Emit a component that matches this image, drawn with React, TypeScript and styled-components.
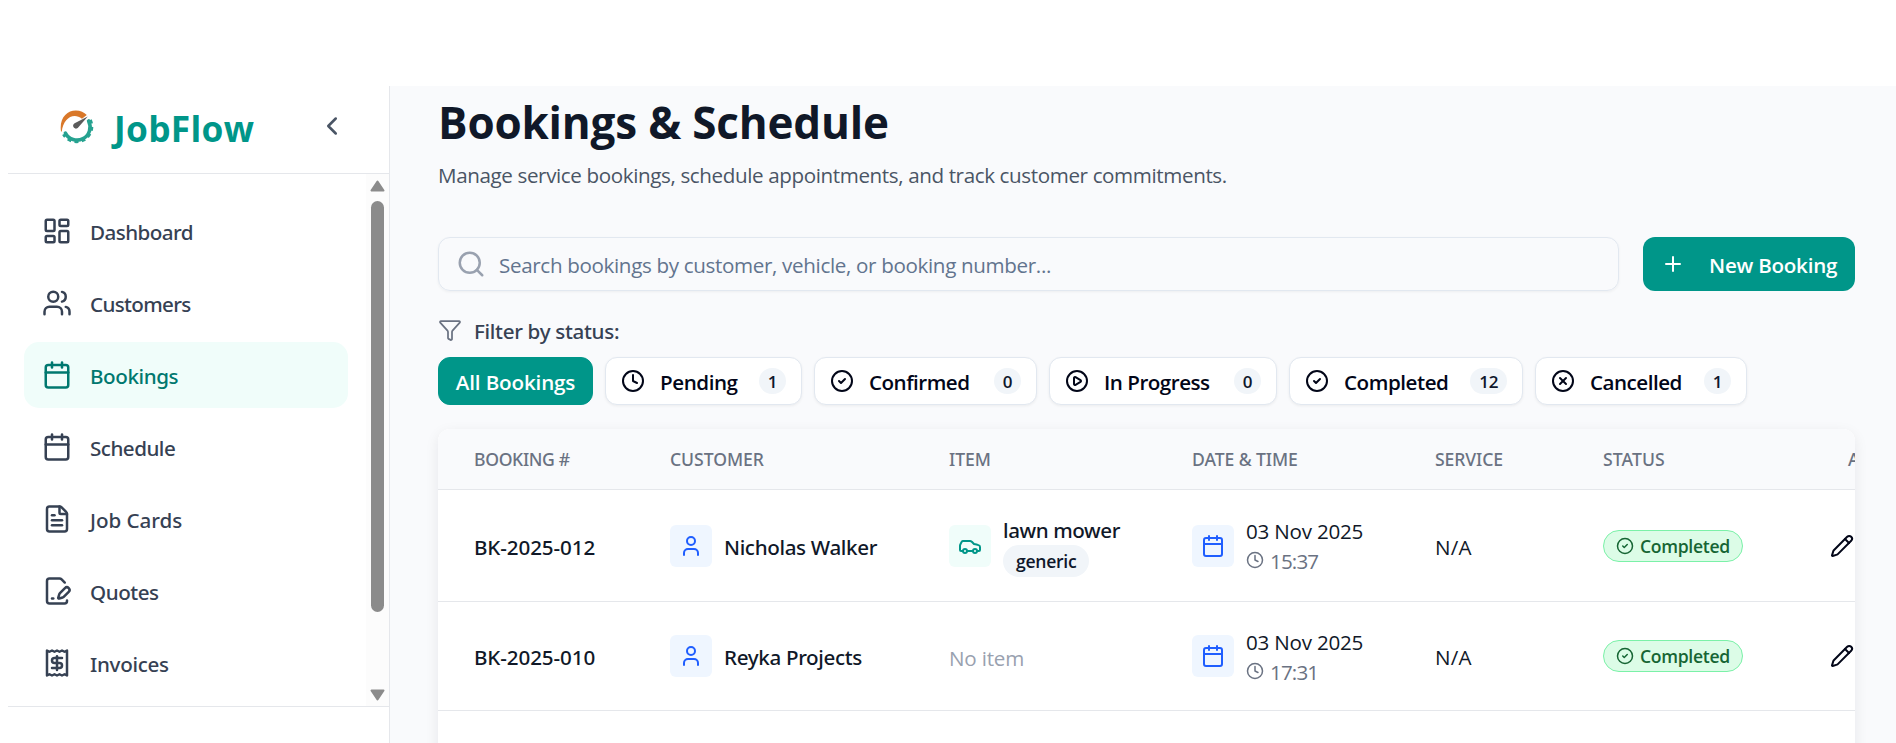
import React from "react";
import styled, { createGlobalStyle } from "styled-components";
import {
  Calendar,
  Car,
  ChevronLeft,
  CircleCheck,
  CirclePlay,
  CircleX,
  Clock,
  FilePenLine,
  FileText,
  Funnel,
  LayoutDashboard,
  Pencil,
  Plus,
  Receipt,
  Search,
  User,
  Users,
  type LucideIcon,
} from "lucide-react";

const GlobalStyle = createGlobalStyle`
  * { box-sizing: border-box; }
  html, body { margin: 0; height: 743px; overflow: hidden; background: #ffffff; }
  body { font-family: "Open Sans", "Noto Sans", sans-serif; color: #101828; }
  svg { flex-shrink: 0; display: block; }
`;

const Page = styled.div`
  display: flex;
  height: 743px;
  padding: 86px 0 0 8px;
  overflow: hidden;
`;

/* Text */

const Text = styled.span<{ $size?: number; $weight?: number; $color?: string; $track?: number; $drop?: number }>`
  font-size: ${(p) => p.$size ?? 20.6}px;
  font-weight: ${(p) => p.$weight ?? 600};
  line-height: 30px;
  color: ${(p) => p.$color ?? "inherit"};
  letter-spacing: ${(p) => p.$track ?? 0}px;
  padding-top: ${(p) => p.$drop ?? 0}px;
  white-space: nowrap;
`;

const MediumText = styled(Text)`
  font-family: "Noto Sans", "Open Sans", sans-serif;
  font-weight: 500;
`;

/* Sidebar */

const Sidebar = styled.aside`
  display: flex;
  flex-direction: column;
  width: 382px;
  flex-shrink: 0;
  border-right: 1px solid #e5e7eb;
`;

const SidebarHeader = styled.div`
  display: flex;
  align-items: center;
  height: 88px;
  padding: 0 42px 6px 52px;
  border-bottom: 1px solid #e5e7eb;
`;

const BrandName = styled.div`
  margin-left: 20px;
  padding-top: 2px;
  font-size: 35.3px;
  font-weight: 700;
  line-height: 40px;
  letter-spacing: 0.3px;
  color: #009689;
`;

const CollapseButton = styled.button`
  display: flex;
  margin-left: auto;
  padding: 0 0 1px;
  border: 0;
  background: none;
  color: #4a5565;
`;

const SidebarBody = styled.div`
  display: flex;
  height: 532px;
  overflow: hidden;
`;

const Nav = styled.nav`
  display: flex;
  flex-direction: column;
  flex: 1;
  gap: 6px;
  padding: 24px 18px 0 16px;
`;

const NavItem = styled.a<{ $active?: boolean }>`
  display: flex;
  align-items: center;
  gap: 18px;
  height: 66px;
  flex-shrink: 0;
  padding: 0 18px;
  border-radius: 15px;
  color: ${(p) => (p.$active ? "#00786f" : "#364153")};
  background: ${(p) => (p.$active ? "#f0fdfa" : "transparent")};
`;

const ScrollTrack = styled.div`
  display: flex;
  flex-direction: column;
  align-items: center;
  width: 23px;
  padding: 6px 0 5px;
  background: #fcfcfc;
`;

const ScrollThumb = styled.div`
  width: 13px;
  height: 411px;
  margin: 9px 0 auto;
  border-radius: 7px;
  background: #8b8b8b;
`;

const SidebarFooter = styled.div`
  flex: 1;
  border-top: 1px solid #e5e7eb;
`;

/* Main area */

const Main = styled.main`
  display: flex;
  flex-direction: column;
  flex: 1;
  min-width: 0;
  padding: 9px 41px 0 48px;
  background: #f9fafc;
`;

const Title = styled.h1`
  margin: 0;
  font-size: 44px;
  font-weight: 700;
  line-height: 54px;
  letter-spacing: -0.18px;
`;

const Subtitle = styled.p`
  margin: 11px 0 47px;
  font-size: 20.6px;
  line-height: 30px;
  letter-spacing: -0.38px;
  color: #4a5565;
`;

const Toolbar = styled.div`
  display: flex;
  gap: 24px;
  height: 54px;
  flex-shrink: 0;
`;

const SearchBox = styled.label`
  display: flex;
  align-items: center;
  flex: 1;
  gap: 13px;
  padding: 0 17px;
  border: 1px solid #e2e8f0;
  border-radius: 12px;
  box-shadow: 0 1px 3px rgba(0, 0, 0, 0.05);
  color: #99a1af;
`;

const SearchInput = styled.input`
  flex: 1;
  padding: 2px 0 0;
  border: 0;
  outline: 0;
  background: transparent;
  font-family: inherit;
  font-size: 20.6px;
  line-height: 30px;
  letter-spacing: -0.34px;

  &::placeholder {
    color: #62748e;
    opacity: 1;
  }
`;

const PrimaryButton = styled.button`
  display: flex;
  align-items: center;
  gap: 24px;
  width: 212px;
  padding: 0 0 0 18px;
  border: 0;
  border-radius: 12px;
  background: #009689;
  color: #ffffff;
  font-family: inherit;
`;

const FilterLabel = styled.div`
  display: flex;
  align-items: center;
  gap: 12px;
  height: 24px;
  margin-top: 27px;
  color: #6a7282;
`;

const Filters = styled.div`
  display: flex;
  gap: 12px;
  margin-top: 15px;
`;

const FilterPill = styled.button<{ $width: number; $active?: boolean }>`
  display: flex;
  align-items: center;
  justify-content: ${(p) => (p.$active ? "center" : "flex-start")};
  width: ${(p) => p.$width}px;
  height: 48px;
  padding: 0 15px;
  border: 1px solid ${(p) => (p.$active ? "#009689" : "#e2e8f0")};
  border-radius: 12px;
  background: ${(p) => (p.$active ? "#009689" : "#ffffff")};
  color: ${(p) => (p.$active ? "#ffffff" : "#020618")};
  box-shadow: ${(p) => (p.$active ? "none" : "0 1px 3px rgba(0, 0, 0, 0.06)")};
  font-family: inherit;

  svg {
    margin-right: 15px;
  }
`;

const Count = styled.span`
  display: flex;
  align-items: center;
  height: 26px;
  margin-left: auto;
  padding: 0 9px;
  border-radius: 13px;
  background: #f1f5f9;
  color: #0f172b;
  font-size: 17px;
  font-weight: 600;
  letter-spacing: -0.4px;
`;

/* Bookings table */

const TableShadow = styled.div`
  margin-top: 24px;
  border-radius: 12px;
  box-shadow: 0 4px 14px rgba(16, 24, 40, 0.08);
`;

const TableCard = styled.section`
  height: 400px;
  overflow: hidden;
  border-radius: 12px;
  background: #ffffff;
`;

const Row = styled.div<{ $height: number; $head?: boolean }>`
  display: grid;
  grid-template-columns: 196px 279px 243px 243px 168px 227px 160px;
  align-items: center;
  width: 1560px;
  height: ${(p) => p.$height}px;
  padding-left: 36px;
  border-bottom: 1px solid #e5e7eb;
  background: ${(p) => (p.$head ? "#f9fafc" : "#ffffff")};
`;

const Cell = styled.div<{ $indent?: number }>`
  display: flex;
  align-items: center;
  gap: 12px;
  padding-left: ${(p) => p.$indent ?? 0}px;
`;

const IconTile = styled.div<{ $tone: "blue" | "teal" }>`
  display: grid;
  place-items: center;
  width: 42px;
  height: 42px;
  border-radius: 6px;
  color: ${(p) => (p.$tone === "blue" ? "#1f5eff" : "#009689")};
  background: ${(p) => (p.$tone === "blue" ? "#eff6ff" : "#f0fdfa")};
`;

const Stack = styled.div`
  display: flex;
  flex-direction: column;
  align-items: flex-start;
  padding-top: 1px;
`;

const TimeLine = styled.div`
  display: flex;
  align-items: center;
  gap: 6px;
  color: #6a7282;

  svg {
    margin-bottom: 2px;
  }
`;

const TypeTag = styled.span`
  display: flex;
  align-items: center;
  height: 32px;
  padding: 0 13px;
  border-radius: 16px;
  background: #f1f5f9;
  color: #0f172b;
`;

const StatusTag = styled.span`
  display: flex;
  align-items: center;
  gap: 6px;
  width: 140px;
  height: 32px;
  padding: 0 12px;
  border: 1px solid #7bf1a8;
  border-radius: 16px;
  background: #dcfce7;
  color: #166534;
`;

/* A speedometer arc over the lower half of a gear. */
function Logo() {
  return (
    <svg width="34" height="34" viewBox="0 0 34 34" fill="none">
      <path d="M1 21.5 C-1 8 7 0.4 15.8 0.4 C20.4 0.4 24.2 2.2 26.8 5 L22 8.8 C13.5 1.8 3 8.5 1.8 21.5 Z" fill="#d9782a" />
      <path d="M28.6 11 A13 13 0 0 1 5.4 23.1" stroke="#26a290" strokeWidth="3.6" strokeLinecap="round" />
      <path d="M30.3 9.9 A15.2 15.2 0 0 1 3.5 24.2" stroke="#26a290" strokeWidth="3" strokeDasharray="3.8 3.4" />
      <path d="M27.8 6.6 L18.6 17 A2.9 2.9 0 1 1 14.6 13.2 Z" fill="#5b5b5b" />
    </svg>
  );
}

function ScrollArrow({ down }: { down?: boolean }) {
  return (
    <svg width="15" height="12" viewBox="0 0 15 12">
      <path
        d={down ? "M1.5 1.5 H13.5 L7.5 10.5 Z" : "M1.5 10.5 H13.5 L7.5 1.5 Z"}
        fill="#8b8b8b"
        stroke="#8b8b8b"
        strokeWidth="2"
        strokeLinejoin="round"
      />
    </svg>
  );
}

const navItems: { label: string; icon: LucideIcon; track: number; active?: boolean }[] = [
  { label: "Dashboard", icon: LayoutDashboard, track: -0.54 },
  { label: "Customers", icon: Users, track: -0.66 },
  { label: "Bookings", icon: Calendar, track: -0.4, active: true },
  { label: "Schedule", icon: Calendar, track: -0.5 },
  { label: "Job Cards", icon: FileText, track: -0.05 },
  { label: "Quotes", icon: FilePenLine, track: -0.45 },
  { label: "Invoices", icon: Receipt, track: -0.3 },
];

const filters: { label: string; icon: LucideIcon; count: number; width: number; track: number }[] = [
  { label: "Pending", icon: Clock, count: 1, width: 197, track: -0.45 },
  { label: "Confirmed", icon: CircleCheck, count: 0, width: 223, track: -0.52 },
  { label: "In Progress", icon: CirclePlay, count: 0, width: 228, track: -0.5 },
  { label: "Completed", icon: CircleCheck, count: 12, width: 234, track: -0.45 },
  { label: "Cancelled", icon: CircleX, count: 1, width: 212, track: -0.5 },
];

const headings: { label: string; track: number }[] = [
  { label: "BOOKING #", track: -0.33 },
  { label: "CUSTOMER", track: -0.05 },
  { label: "ITEM", track: -0.05 },
  { label: "DATE & TIME", track: -0.08 },
  { label: "SERVICE", track: -0.1 },
  { label: "STATUS", track: 0.1 },
];

const bookings = [
  { id: "BK-2025-012", customer: "Nicholas Walker", item: "lawn mower", kind: "generic", date: "03 Nov 2025", time: "15:37", service: "N/A", height: 112 },
  { id: "BK-2025-010", customer: "Reyka Projects", item: null, kind: null, date: "03 Nov 2025", time: "17:31", service: "N/A", height: 109 },
];

export default function App() {
  return (
    <Page>
      <GlobalStyle />
      <Sidebar>
        <SidebarHeader>
          <Logo />
          <BrandName>JobFlow</BrandName>
          <CollapseButton aria-label="Collapse sidebar">
            <ChevronLeft size={30} />
          </CollapseButton>
        </SidebarHeader>
        <SidebarBody>
          <Nav>
            {navItems.map(({ label, icon: Icon, track, active }) => (
              <NavItem key={label} $active={active}>
                <Icon size={30} />
                <MediumText $track={track} $drop={2}>{label}</MediumText>
              </NavItem>
            ))}
          </Nav>
          <ScrollTrack>
            <ScrollArrow />
            <ScrollThumb />
            <ScrollArrow down />
          </ScrollTrack>
        </SidebarBody>
        <SidebarFooter />
      </Sidebar>

      <Main>
        <Title>Bookings &amp; Schedule</Title>
        <Subtitle>Manage service bookings, schedule appointments, and track customer commitments.</Subtitle>

        <Toolbar>
          <SearchBox>
            <Search size={30} />
            <SearchInput placeholder="Search bookings by customer, vehicle, or booking number..." />
          </SearchBox>
          <PrimaryButton>
            <Plus size={24} />
            <Text $track={-0.25} $drop={2}>New Booking</Text>
          </PrimaryButton>
        </Toolbar>

        <FilterLabel>
          <Funnel size={24} strokeWidth={1.75} />
          <MediumText $color="#364153" $track={-0.31} $drop={2}>Filter by status:</MediumText>
        </FilterLabel>
        <Filters>
          <FilterPill $width={155} $active>
            <Text $track={-0.15} $drop={2}>All Bookings</Text>
          </FilterPill>
          {filters.map(({ label, icon: Icon, count, width, track }) => (
            <FilterPill key={label} $width={width}>
              <Icon size={24} />
              <Text $track={track} $drop={2}>{label}</Text>
              <Count>{count}</Count>
            </FilterPill>
          ))}
        </Filters>

        <TableShadow>
          <TableCard>
            <Row $height={61} $head>
              {headings.map(({ label, track }) => (
                <Cell key={label}>
                  <MediumText $size={17.6} $color="#6a7282" $track={track}>{label}</MediumText>
                </Cell>
              ))}
              <Cell $indent={18}>
                <MediumText $size={17.6} $color="#6a7282">ACTIONS</MediumText>
              </Cell>
            </Row>
            {bookings.map((b) => (
              <Row key={b.id} $height={b.height}>
                <Cell>
                  <MediumText $track={-0.1} $drop={2}>{b.id}</MediumText>
                </Cell>
                <Cell>
                  <IconTile $tone="blue"><User size={24} /></IconTile>
                  <MediumText $track={-0.34} $drop={2}>{b.customer}</MediumText>
                </Cell>
                <Cell>
                  {b.item ? (
                    <>
                      <IconTile $tone="teal"><Car size={24} /></IconTile>
                      <Stack>
                        <MediumText $track={-0.4}>{b.item}</MediumText>
                        <TypeTag><Text $size={17.6} $track={-0.29}>{b.kind}</Text></TypeTag>
                      </Stack>
                    </>
                  ) : (
                    <Text $weight={400} $color="#99a1af" $track={-0.2} $drop={3}>No item</Text>
                  )}
                </Cell>
                <Cell>
                  <IconTile $tone="blue"><Calendar size={24} /></IconTile>
                  <Stack>
                    <Text $weight={400} $track={-0.22}>{b.date}</Text>
                    <TimeLine>
                      <Clock size={18} />
                      <Text $weight={400} $track={-0.85}>{b.time}</Text>
                    </TimeLine>
                  </Stack>
                </Cell>
                <Cell>
                  <Text $weight={400} $track={0.2} $drop={2}>{b.service}</Text>
                </Cell>
                <Cell>
                  <StatusTag>
                    <CircleCheck size={18} />
                    <Text $size={17.6} $track={-0.32}>Completed</Text>
                  </StatusTag>
                </Cell>
                <Cell>
                  <Pencil size={24} color="#020618" />
                </Cell>
              </Row>
            ))}
          </TableCard>
        </TableShadow>
      </Main>
    </Page>
  );
}
